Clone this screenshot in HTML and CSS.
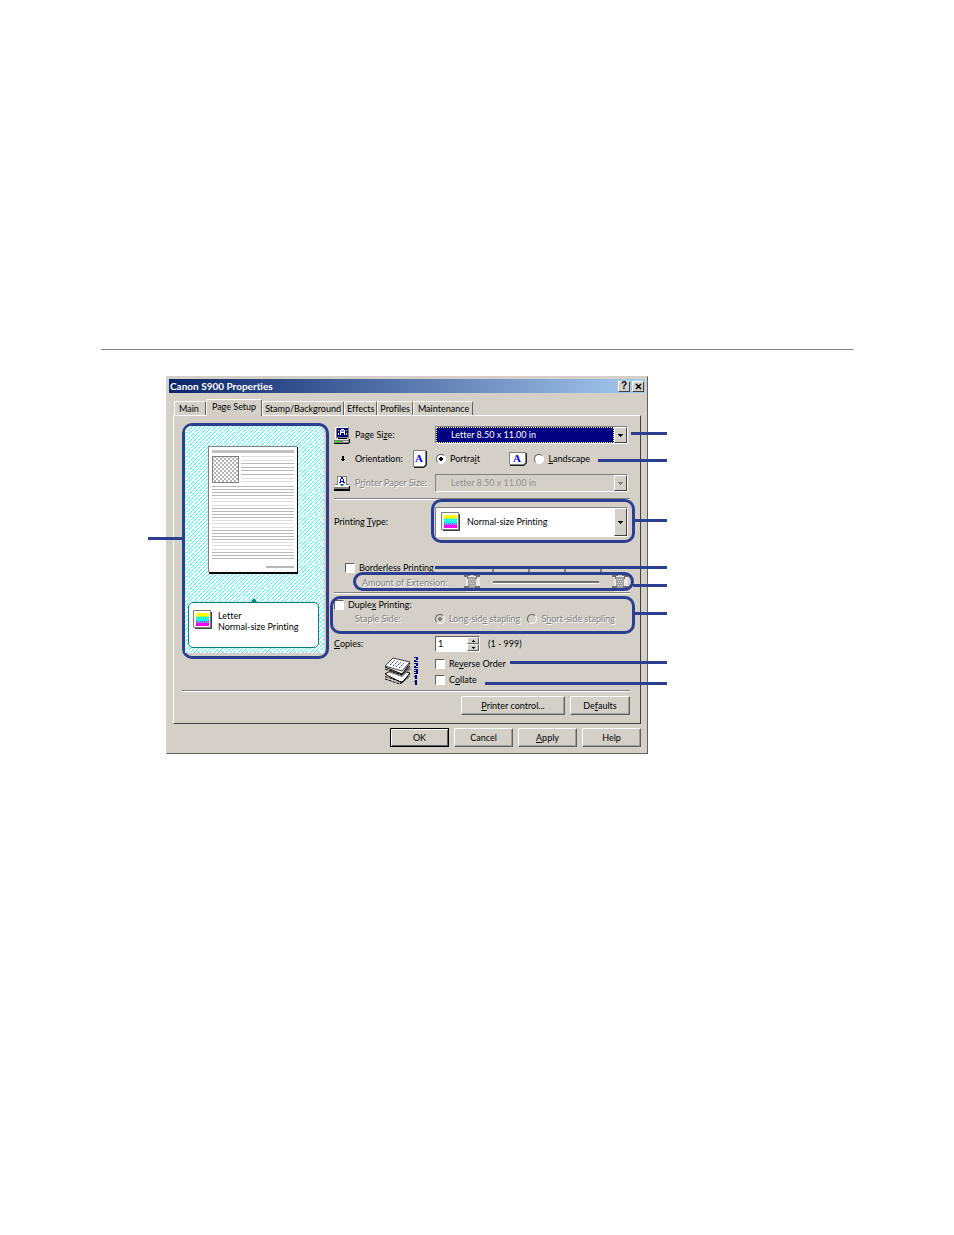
FILE: index.html
```
<!DOCTYPE html>
<html lang="en">
<head>
    <meta charset="UTF-8">
    <meta name="viewport" content="width=device-width, initial-scale=1.0">
    <title>Canon S900 Properties</title>
    <link rel="stylesheet" href="styles.css">
</head>
<body>
    <!-- shared drawings -->
    <svg class="defs" width="0" height="0" aria-hidden="true">
        <defs>
            <pattern id="hatch" width="12" height="12" patternUnits="userSpaceOnUse" shape-rendering="crispEdges">
                <rect width="12" height="12" fill="#fff"/>
                <path fill="#30ffff" d="M3 0h1v1h-1zM2 1h1v1h-1zM0 3h1v1h-1zM7 0h1v1h-1zM6 1h1v1h-1zM5 2h1v1h-1zM4 3h1v1h-1zM3 4h1v1h-1zM1 6h1v1h-1zM0 7h1v1h-1zM11 0h1v1h-1zM10 1h1v1h-1zM9 2h1v1h-1zM7 4h1v1h-1zM6 5h1v1h-1zM5 6h1v1h-1zM4 7h1v1h-1zM2 9h1v1h-1zM1 10h1v1h-1zM0 11h1v1h-1zM11 4h1v1h-1zM10 5h1v1h-1zM8 7h1v1h-1zM7 8h1v1h-1zM6 9h1v1h-1zM4 11h1v1h-1zM11 8h1v1h-1zM10 9h1v1h-1zM9 10h1v1h-1zM8 11h1v1h-1z"/>
                <path fill="#b0ffff" d="M1 2h1v1h-1zM2 5h1v1h-1zM8 3h1v1h-1zM3 8h1v1h-1zM9 6h1v1h-1zM5 10h1v1h-1zM0 0h1v1h-1zM1 1h1v1h-1zM6 3h1v1h-1zM4 5h1v1h-1zM8 9h1v1h-1zM10 7h1v1h-1zM0 9h1v1h-1zM3 6h1v1h-1zM11 2h1v1h-1z"/>
            </pattern>
            <pattern id="checks" width="4" height="4" patternUnits="userSpaceOnUse">
                <rect width="4" height="4" fill="#fff"/>
                <path fill="#b4b4b4" d="M0 0h2v2h-2zM2 2h2v2h-2z"/>
            </pattern>
            <pattern id="text-lines" y="40" width="82" height="22" patternUnits="userSpaceOnUse">
                <path fill="#b8b8b8" d="M0 0h82v1h-82zM0 3h82v1h-82zM0 6h82v1h-82zM0 9h82v1h-82z"/>
                <path fill="#dedede" d="M0 12h82v1h-82zM0 15h82v1h-82zM0 19h82v1h-82z"/>
            </pattern>
            <symbol id="normal-size" viewBox="0 0 20 20">
                <path fill="#404040" d="M2 2h17v17H2z"/>
                <path fill="#fff" stroke="#808080" d="M.5.5h17v17H.5z"/>
                <path fill="#ffff00" d="M3 3h13v4H3z"/>
                <path fill="#00ffff" d="M3 7h13v5H3z"/>
                <path fill="#ff00ff" d="M3 13h13v3H3z"/>
                <path fill="#8080ff" d="M3 12h13v1H3z"/>
                <path stroke="#80ff80" stroke-dasharray="1 1" d="M3 6.500h13M3 8.500h13"/>
                <path stroke="#ff00ff" stroke-dasharray="1 1" d="M3 11.500h13"/>
            </symbol>
            <symbol id="arrow-down" viewBox="0 0 5 3">
                <path d="M0 0h5v1H0zM1 1h3v1H1zM2 2h1v1H2z"/>
            </symbol>
            <symbol id="extension" viewBox="0 0 16 18">
                <path fill="#fff" d="M2 2h14v16H2z" opacity=".5"/>
                <path fill="#a0a0a0" d="M4 3h8v11H4z"/>
                <path fill="none" stroke="#e0e0e0" stroke-dasharray="1 1" d="M5 5.500h6M6 7.500h6M5 9.500h6M6 11.500h6"/>
                <path fill="#707070" d="M0 0h6v2H4v3H3V3H0zM16 0h-6v2h2v3h1V3h3zM0 17v-5h5v2h1v3H4v-1H2v1zM16 17v-5h-5v2h-1v3h2v-1h2v1z"/>
            </symbol>
        </defs>
    </svg>

    <main class="page">
        <hr class="rule">

        <section class="dialog" aria-label="Canon S900 Properties">
            <header class="title-bar">
                <h1>Canon S900 Properties</h1>
                <button type="button" class="title-button" aria-label="What's this">?</button>
                <button type="button" class="title-button" aria-label="Close">
                    <svg width="7" height="7" viewBox="0 0 7 7"><path d="M1 1l5 5M6 1l-5 5" stroke="#000" stroke-width="1.500"/></svg>
                </button>
            </header>

            <nav class="tabs" role="tablist">
                <button type="button" role="tab" class="tab">Main</button>
                <button type="button" role="tab" class="tab active" aria-selected="true">Page Setup</button>
                <button type="button" role="tab" class="tab">Stamp/Background</button>
                <button type="button" role="tab" class="tab">Effects</button>
                <button type="button" role="tab" class="tab">Profiles</button>
                <button type="button" role="tab" class="tab">Maintenance</button>
            </nav>

            <div class="panel">
                <div class="columns">
                    <div class="preview">
                        <span class="leader leader-preview"></span>
                        <div class="preview-area">
                            <svg class="hatching" aria-hidden="true"><rect width="100%" height="100%" fill="url(#hatch)"/></svg>
                            <svg class="sheet" width="91" height="128" viewBox="0 0 91 128" shape-rendering="crispEdges" aria-hidden="true">
                                <path fill="#000" d="M1 1h89v127H1z"/>
                                <path fill="#808080" d="M0 0h89v126H0z"/>
                                <path fill="#fff" d="M1 1h88v125H1z"/>
                                <path fill="#c0c0c0" d="M4 4h82v3H4z"/>
                                <path fill="url(#checks)" stroke="#808080" d="M4.500 10.500h26v26h-26z"/>
                                <path fill="#dedede" d="M33 10h53v1H33zM33 14h53v1H33zM33 32h53v1H33zM33 35h53v1H33z"/>
                                <path fill="#b8b8b8" d="M33 17h53v1H33zM33 21h53v1H33zM33 24h53v1H33zM33 28h53v1H33z"/>
                                <path fill="url(#text-lines)" d="M4 39h82v76H4z"/>
                                <path fill="#b8b8b8" d="M58 120h28v2H58z"/>
                            </svg>
                            <div class="summary">
                                <svg width="20" height="20"><use href="#normal-size"/></svg>
                                <p>Letter<br>Normal-size Printing</p>
                            </div>
                        </div>
                    </div>

                    <form class="settings" id="pageSetup">
                        <div class="row">
                            <svg class="row-icon" width="16" height="17" viewBox="0 0 16 17" shape-rendering="crispEdges" aria-hidden="true">
                                <path fill="#808080" d="M1 0h14v11H1z"/><path fill="#fff" d="M1 0h13v1H2v10H1z"/><path fill="#000080" d="M3 1h11v9H3z"/>
                                <path fill="#fff" d="M7 2h3v1H7zM6 3h1v5H6zM10 3h1v5h-1zM7 5h3v1H7zM12 3h1v1h-1zM4 3h1v1H4zM4 6h1v2H4zM12 6h1v2h-1z"/>
                                <path fill="#8080ff" d="M7 3h3v2H7z"/>
                                <path fill="#808080" d="M0 12h15v4H0z"/><path fill="#e8e8e8" d="M0 12h14v1H0z"/>
                                <path fill="#000" d="M4 11h9v1H4zM0 16h15v1H0zM15 12h1v4h-1z"/>
                                <path fill="#00ff00" d="M1 14h5v1H1z"/><path fill="#e8e8e8" d="M9 14h5v1H9z"/>
                            </svg>
                            <label class="name" for="pageSize">Page Si<u>z</u>e:</label>
                            <div class="combo combo-focus">
                                <select id="pageSize"><option>Letter 8.50 x 11.00 in</option></select>
                                <span class="drop"><svg width="5" height="3"><use href="#arrow-down"/></svg></span>
                            </div>
                            <span class="leader leader-size"></span>
                        </div>

                        <div class="row row-orientation">
                            <svg class="row-icon" width="16" height="17" viewBox="0 0 16 17" shape-rendering="crispEdges" aria-hidden="true">
                                <path d="M8 5h2v3h1v1h-1v1H8V9H7V8h1z"/>
                            </svg>
                            <span class="name name-short">Orientation:</span>
                            <svg class="orient" width="14" height="18" viewBox="0 0 14 18" aria-hidden="true">
                                <path fill="#202020" d="M1 1h13v14l-3 3H1z"/><path fill="#fff" stroke="#808080" d="M.5.5h12v14l-2 2H.5z"/>
                                <text x="6" y="12" class="letter">A</text>
                            </svg>
                            <label class="choice"><input type="radio" name="orientation" checked><span>Portra<u>i</u>t</span></label>
                            <svg class="orient orient-wide" width="18" height="14" viewBox="0 0 18 14" aria-hidden="true">
                                <path fill="#202020" d="M1 1h17v10l-3 3H1z"/><path fill="#fff" stroke="#808080" d="M.5.5h16v10l-2 2H.5z"/>
                                <text x="8" y="10" class="letter">A</text>
                            </svg>
                            <label class="choice"><input type="radio" name="orientation"><span><u>L</u>andscape</span></label>
                            <span class="leader leader-orientation"></span>
                        </div>

                        <div class="row">
                            <svg class="row-icon" width="16" height="17" viewBox="0 0 16 17" shape-rendering="crispEdges" aria-hidden="true">
                                <path fill="#808080" d="M3 1h10v9H3z"/><path fill="#fff" d="M4 2h8v8H4z"/>
                                <path fill="#0000ff" d="M7 2h2v2H7zM6 4h1v2H6zM9 4h1v2H9zM6 6h4v1H6zM5 7h2v1H5zM9 7h2v1H9z"/>
                                <path fill="#808080" d="M1 9h3v1H1zM12 9h3v1h-3z"/><path fill="#fff" d="M1 10h14v2H1z"/>
                                <path fill="#008080" d="M6 9h4v1H6zM7 10h2v1H7z"/>
                                <path fill="#808080" d="M0 12h15v2H0z"/><path d="M0 14h16v2H0zM15 11h1v3h-1z"/>
                            </svg>
                            <label class="name disabled" for="paperSize">P<u>r</u>inter Paper Size:</label>
                            <div class="combo combo-disabled">
                                <select id="paperSize" disabled><option>Letter 8.50 x 11.00 in</option></select>
                                <span class="drop"><svg width="5" height="3"><use href="#arrow-down"/></svg></span>
                            </div>
                        </div>

                        <hr class="groove groove-paper">

                        <div class="row row-type">
                            <label class="name name-wide" for="printingType">Printing <u>T</u>ype:</label>
                            <div class="combo combo-large">
                                <svg class="combo-icon" width="20" height="20"><use href="#normal-size"/></svg>
                                <select id="printingType"><option>Normal-size Printing</option></select>
                                <span class="drop"><svg width="5" height="3"><use href="#arrow-down"/></svg></span>
                                <span class="ring ring-type"></span>
                            </div>
                            <span class="leader leader-type"></span>
                        </div>

                        <div class="row row-borderless">
                            <label class="choice"><input type="checkbox"><span>Borderless Printing</span></label>
                            <span class="leader leader-borderless"></span>
                        </div>

                        <div class="row row-extension">
                            <label class="disabled extension-name" for="extension">Amount of Extension:</label>
                            <svg width="16" height="18"><use href="#extension"/></svg>
                            <input type="range" id="extension" min="0" max="3" disabled>
                            <svg width="16" height="18"><use href="#extension"/></svg>
                            <span class="ticks"><i></i><i></i><i></i><i></i></span>
                            <span class="ring ring-extension"></span>
                            <span class="leader leader-extension"></span>
                        </div>

                        <hr class="groove">

                        <div class="duplex">
                            <div class="row row-check">
                                <label class="choice"><input type="checkbox"><span>Duple<u>x</u> Printing:</span></label>
                            </div>
                            <div class="row row-check staple">
                                <span class="disabled staple-name">Staple Side:</span>
                                <label class="choice disabled"><input type="radio" name="staple" checked disabled><span>Long-sid<u>e</u> stapling</span></label>
                                <label class="choice disabled"><input type="radio" name="staple" disabled><span>S<u>h</u>ort-side stapling</span></label>
                            </div>
                            <span class="ring ring-duplex"></span>
                            <span class="leader leader-duplex"></span>
                        </div>

                        <div class="row row-copies">
                            <label class="name name-wide" for="copies"><u>C</u>opies:</label>
                            <div class="spinner">
                                <input type="text" id="copies" value="1">
                                <span class="spin-buttons">
                                    <button type="button" aria-label="More"><svg class="up" width="3" height="2" viewBox="0 0 3 2"><path d="M0 0h3v1H0zM1 1h1v1H1z"/></svg></button>
                                    <button type="button" aria-label="Fewer"><svg width="3" height="2" viewBox="0 0 3 2"><path d="M0 0h3v1H0zM1 1h1v1H1z"/></svg></button>
                                </span>
                            </div>
                            <span class="range-note">(1 - 999)</span>
                        </div>

                        <div class="order">
                            <svg class="stack" width="36" height="29" viewBox="0 0 36 29" aria-hidden="true">
                                <path fill="#fff" stroke="#000" d="M1 17l9-5 16 4-8 10z"/>
                                <path fill="none" stroke="#000" d="M1 19.500l17 5.500 8-8M1 22l15 5 10-8" stroke-dasharray="3 1"/>
                                <path fill="#808080" d="M3 15l15 5 9-8-2-3z"/>
                                <path fill="#fff" stroke="#000" d="M1 10l9-8 16 4-8 11z"/>
                                <path fill="none" stroke="#000" d="M1 12l17 6 8-9" stroke-dasharray="3 1"/>
                                <path fill="#fff" stroke="#404040" d="M1 9l8-8 17 4-8 9z"/>
                                <path fill="none" stroke="#2020a0" stroke-dasharray="2 1" d="M6 8l5-5M9 9l5-5M12 10l5-5M15 11l5-5"/>
                                <path fill="#000080" d="M30 0h4v3h-2v1h2v1h-4V3h2V1h-2zM30 6h4v3h-2v1h2v1h-4V9h2V7h-2zM30 12h4v5h-4v-1h2v-1h-2v-1h2v-1h-2zM31 18h2v4h-2zM31 23h2v5h-2zM30 19h1v1h-1zM30 24h1v1h-1z"/>
                            </svg>
                            <div class="order-options">
                                <label class="choice"><input type="checkbox"><span>Re<u>v</u>erse Order</span></label>
                                <label class="choice"><input type="checkbox"><span>C<u>o</u>llate</span></label>
                            </div>
                            <span class="leader leader-reverse"></span>
                            <span class="leader leader-collate"></span>
                        </div>
                    </form>
                </div>

                <hr class="groove groove-wide">
                <div class="panel-buttons">
                    <button type="button" class="button button-wide"><u>P</u>rinter control...</button>
                    <button type="button" class="button">De<u>f</u>aults</button>
                </div>
            </div>

            <footer class="dialog-buttons">
                <button type="submit" form="pageSetup" class="button button-default">OK</button>
                <button type="button" class="button">Cancel</button>
                <button type="button" class="button"><u>A</u>pply</button>
                <button type="button" class="button">Help</button>
            </footer>
        </section>
    </main>
</body>
</html>
```
FILE: styles.css
```
* {
    box-sizing: border-box;
}
body {
    margin: 0;
    background: #fff;
    color: #000;
    font: 9px/12px Lato, "Liberation Sans", sans-serif;
    font-variant-ligatures: none;
}
button, input, select {
    font: inherit;
    font-variant-ligatures: none;
    color: inherit;
    margin: 0;
    padding: 0;
    border-radius: 0;
}
svg {
    display: block;
    flex: none;
}
.defs {
    position: absolute;
}
.page {
    padding: 349px 101px 0;
}
.rule {
    margin: 0 0 26px;
    border: 0;
    border-top: 1px solid #808080;
}

/* dialog window */
.dialog {
    margin: 0 205px 0 65px;
    padding: 2px;
    background: #d4d0c8;
    border: 1px solid;
    border-color: #d4d0c8 #606060 #606060 #d4d0c8;
    white-space: nowrap;
}
.title-bar {
    display: flex;
    align-items: center;
    gap: 2px;
    height: 14px;
    padding: 0 1px;
    background: linear-gradient(to right, #0a246a, #a6caf0);
}
.title-bar h1 {
    flex: 1;
    margin: 0;
    color: #fff;
    font: bold 10px/12px Lato, "Liberation Sans", sans-serif;
    font-variant-ligatures: none;
}
.title-button {
    display: flex;
    align-items: center;
    justify-content: center;
    width: 12px;
    height: 11px;
    background: #d4d0c8;
    border: 1px solid;
    border-color: #fff #404040 #404040 #fff;
    font: bold 10px/10px "Liberation Sans", sans-serif;
}

/* tabs */
.tabs {
    display: flex;
    align-items: flex-end;
    margin-top: 6px;
    padding-left: 5px;
}
.tab {
    height: 14px;
    padding: 0 2px;
    background: #d4d0c8;
    border: 1px solid;
    border-color: #fff #606060 transparent #fff;
    border-bottom: 0;
    border-radius: 2px 2px 0 0;
}
.tab:first-child {
    padding: 0 6px 0 4px;
}
.tab:last-child {
    padding: 0 3px 0 4px;
}
.tab.active {
    height: 17px;
    margin-bottom: -1px;
    padding: 0 5px 3px;
    position: relative;
}
.panel {
    margin: 0 4px;
    padding: 7px 10px 8px 8px;
    border: 1px solid;
    border-color: #fff #404040 #404040 #fff;
}
.columns {
    display: flex;
    gap: 5px;
}

/* preview */
.preview {
    position: relative;
    width: 147px;
    margin-bottom: 31px;
    padding: 0 2px 3px 0;
    border: 3px solid #2b3e90;
    border-radius: 10px;
}
.preview-area {
    position: relative;
    display: flex;
    flex-direction: column;
    align-items: center;
    height: 100%;
    padding: 20px 5px 5px 3px;
    border-radius: 6px 6px 0 0;
    overflow: hidden;
}
.hatching {
    position: absolute;
    inset: 0;
    width: 100%;
    height: 100%;
}
.sheet {
    position: relative;
}
.summary {
    position: relative;
    display: flex;
    gap: 5px;
    width: 100%;
    height: 46px;
    margin-top: auto;
    padding: 7px 4px;
    background: #fff;
    border: 1px solid #008080;
    border-radius: 5px;
}
.preview-area::after {
    content: "";
    position: absolute;
    bottom: 51px;
    border: 3px solid transparent;
    border-top: 0;
    border-bottom: 4px solid #008080;
}
.summary p {
    margin: 0;
    line-height: 11px;
}

/* settings */
.settings {
    flex: 1;
    min-width: 0;
}
.row {
    position: relative;
    display: flex;
    align-items: center;
    height: 24px;
    padding-right: 2px;
}
.row-icon {
    margin-right: 5px;
}
.name {
    width: 80px;
}
.name-wide {
    width: 101px;
}
.name-short {
    width: 58px;
}
.disabled {
    color: #808080;
    text-shadow: 1px 1px #fff;
}
.groove {
    margin: 0;
    border: 0;
    border-top: 1px solid #808080;
    border-bottom: 1px solid #fff;
}
.groove-paper {
    margin: 3px 0 7px;
}
.groove-wide {
    margin: 0 0 4px;
}

.combo {
    position: relative;
    display: flex;
    align-items: stretch;
    flex: 1;
    height: 18px;
    background: #fff;
    border: 1px solid;
    border-color: #808080 #fff #fff #808080;
}
.combo select {
    flex: 1;
    min-width: 0;
    padding-left: 15px;
    appearance: none;
    background: transparent;
    border: 0;
    outline: 0;
}
.combo-focus select {
    background: #000080;
    color: #fff;
    outline: 1px dotted #ffff80;
    outline-offset: -1px;
}
.combo-disabled {
    background: #d4d0c8;
}
.combo-disabled select {
    opacity: 1;
    color: #909090;
}
.combo-disabled .drop {
    fill: #808080;
}
.combo-large {
    height: 30px;
}
.combo-large select {
    padding-left: 6px;
}
.combo-icon {
    align-self: center;
    margin-left: 5px;
}
.drop {
    display: flex;
    align-items: center;
    justify-content: center;
    width: 13px;
    background: #d4d0c8;
    border: 1px solid;
    border-color: #fff #404040 #404040 #fff;
    pointer-events: none;
}

.row-orientation .orient {
    margin-right: 9px;
}
.row-orientation .orient-wide {
    margin: 0 7px 0 auto;
}
.row-orientation {
    padding-right: 40px;
}
.letter {
    fill: #0000ff;
    font: bold 11px "Liberation Serif", serif;
    text-anchor: middle;
}

.choice {
    display: flex;
    align-items: center;
    gap: 4px;
}
.choice input {
    appearance: none;
    width: 10px;
    height: 10px;
    background: #fff;
    border: 1px solid;
    border-color: #606060 #fff #fff #606060;
}
.choice input[type="radio"] {
    border-radius: 50%;
}
.choice input[type="radio"]:checked {
    background: radial-gradient(circle, #000 0 2px, #fff 2px);
}
.choice input:disabled {
    background: #d4d0c8;
}
.choice input[type="radio"]:disabled:checked {
    background: radial-gradient(circle, #808080 0 2px, #d4d0c8 2px);
}

.row-type {
    height: 30px;
}
.row-borderless {
    height: 14px;
    margin-top: 24px;
    padding-left: 11px;
}
.row-extension {
    height: 15px;
    margin-bottom: 2px;
    padding-left: 28px;
}
.extension-name {
    width: 102px;
}
.row-extension input {
    appearance: none;
    flex: 1;
    min-width: 0;
    height: 3px;
    margin: 0 13px;
    background: #707070;
    border-bottom: 1px solid #fff;
}
.row-extension input::-webkit-slider-thumb {
    appearance: none;
    width: 0;
}
.ticks {
    position: absolute;
    top: -6px;
    right: 28px;
    left: 158px;
    display: flex;
    justify-content: space-between;
}
.ticks i {
    width: 2px;
    height: 3px;
    background: #808080;
}
.duplex {
    position: relative;
    padding-top: 4px;
}
.row-check {
    height: 14px;
}
.staple {
    padding-right: 15px;
}
.staple-name {
    width: 80px;
    margin-left: 21px;
}
.staple .choice:last-child {
    margin-left: auto;
}
.row-copies {
    height: 16px;
    margin-top: 10px;
}
.spinner {
    display: flex;
    width: 45px;
    height: 16px;
    background: #fff;
    border: 1px solid;
    border-color: #606060 #fff #fff #606060;
}
.spinner input {
    flex: 1;
    min-width: 0;
    padding-left: 2px;
    background: transparent;
    border: 0;
    outline: 0;
}
.spin-buttons {
    display: flex;
    flex-direction: column;
    width: 12px;
}
.spin-buttons button {
    display: flex;
    flex: 1;
    align-items: center;
    justify-content: center;
    min-height: 0;
    background: #d4d0c8;
    border: 1px solid;
    border-color: #fff #606060 #606060 #fff;
}
.up {
    transform: rotate(180deg);
}
.range-note {
    margin-left: 8px;
}
.order {
    position: relative;
    display: flex;
    align-items: center;
    gap: 15px;
    height: 38px;
    padding-left: 50px;
}
.order-options {
    display: flex;
    flex-direction: column;
    gap: 4px;
    padding-top: 2px;
}

/* push buttons */
.panel-buttons, .dialog-buttons {
    display: flex;
    justify-content: flex-end;
    gap: 5px;
}
.dialog-buttons {
    padding: 4px;
}
.button {
    width: 60px;
    height: 19px;
    background: #d4d0c8;
    border: 1px solid;
    border-color: #fff #606060 #606060 #fff;
    box-shadow: inset -1px -1px #a0a0a0;
}
.button-wide {
    width: 104px;
}
.dialog-buttons .button {
    width: 59px;
}
.button-default {
    border-color: #000;
    box-shadow: inset 1px 1px #fff, inset -1px -1px #606060;
}

/* callouts */
.leader {
    position: absolute;
    right: -37px;
    height: 3px;
    background: #2b3e90;
}
.leader-preview {
    top: 111px;
    right: 100%;
    width: 37px;
}
.leader-size {
    top: 9px;
    width: 36px;
}
.leader-orientation {
    top: 12px;
    width: 69px;
}
.leader-type {
    top: 12px;
    width: 33px;
}
.leader-borderless {
    top: 5px;
    width: 232px;
}
.leader-extension {
    top: 9px;
    width: 34px;
}
.leader-duplex {
    top: 18px;
    width: 33px;
}
.leader-reverse {
    top: 9px;
    width: 157px;
}
.leader-collate {
    top: 30px;
    width: 182px;
}
.ring {
    position: absolute;
    border: 3px solid #2b3e90;
    border-radius: 10px;
    pointer-events: none;
}
.ring-type {
    inset: -9px -8px -7px -5px;
}
.ring-extension {
    inset: -3px -4px -1px 19px;
}
.ring-duplex {
    inset: 2px -5px -8px -4px;
}
```
